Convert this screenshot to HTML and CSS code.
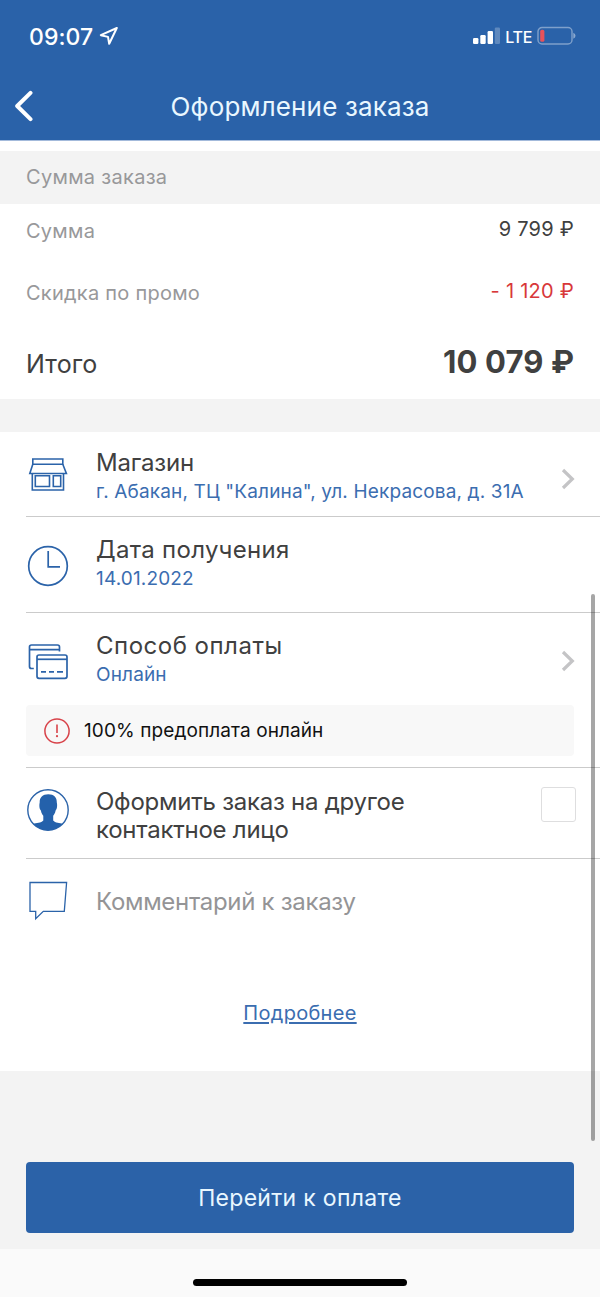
FILE: index.html
```html
<!DOCTYPE html>
<html lang="ru">
<head>
    <meta charset="UTF-8">
    <meta name="viewport" content="width=device-width, initial-scale=1.0">
    <title>Оформление заказа</title>
    <link rel="stylesheet" href="styles.css">
</head>
<body>
    <header class="header">
        <div class="status-bar">
            <div class="status-left">
                <span class="time">09:07</span>
                <svg class="location" width="20" height="20" viewBox="0 0 20 20">
                    <path d="M17.8 2 L1.8 9.2 L9 10.9 L10.2 17.8 Z" fill="none" stroke="#fff" stroke-width="2" stroke-linejoin="round"/>
                </svg>
            </div>
            <div class="status-right">
                <svg width="28" height="18" viewBox="0 0 28 18">
                    <g fill="#fff">
                        <rect x="0" y="11" width="5.4" height="6" rx="1.2"/>
                        <rect x="7.3" y="8" width="5.4" height="9" rx="1.2"/>
                        <rect x="14.6" y="4" width="5.4" height="13" rx="1.2"/>
                        <rect x="21.8" y="0.5" width="5.2" height="16.5" rx="1.2" opacity="0.25"/>
                    </g>
                </svg>
                <span class="network">LTE</span>
                <svg width="40" height="20" viewBox="0 0 40 20">
                    <rect x="2" y="1.5" width="34" height="16.5" rx="4" fill="none" stroke="#fff" stroke-opacity="0.4" stroke-width="1.4"/>
                    <rect x="4.2" y="3.8" width="4.2" height="12" rx="1.6" fill="#e8525a"/>
                    <path d="M37.3 6.8 Q39.5 7.6 39.5 9.8 Q39.5 12 37.3 12.8 Z" fill="#fff" opacity="0.45"/>
                </svg>
            </div>
        </div>
        <div class="nav-bar">
            <svg class="back" width="20" height="32" viewBox="0 0 20 32">
                <path d="M16.5 2.8 L3.2 16 L16.5 29.2" fill="none" stroke="#fff" stroke-width="4" stroke-linecap="round" stroke-linejoin="round"/>
            </svg>
            <h1>Оформление заказа</h1>
        </div>
    </header>

    <main class="content">
        <h2 class="section-title">Сумма заказа</h2>

        <section class="summary">
            <div class="summary-row">
                <span class="label">Сумма</span>
                <span class="value">9 799 ₽</span>
            </div>
            <div class="summary-row">
                <span class="label">Скидка по промо</span>
                <span class="value discount">- 1 120 ₽</span>
            </div>
            <div class="summary-row total">
                <span class="label">Итого</span>
                <span class="value">10 079 ₽</span>
            </div>
        </section>

        <section class="details">
            <div class="row shop">
                <svg class="icon" width="44" height="44" viewBox="0 0 44 44">
                    <g fill="none" stroke="#2b63a9" stroke-width="1.6">
                        <path d="M6.8 6 H36.8 V11.2 H6.8 Z"/>
                        <path d="M6.8 11.2 L3.8 20.5 H40.4 L36.8 11.2"/>
                        <path d="M6.3 21 V37 H37.5 V21"/>
                        <path d="M9.3 22.8 H23.5 V33.5 H9.3 Z"/>
                        <path d="M27.3 22.8 H34.7 V33.5 H27.3 Z"/>
                    </g>
                </svg>
                <div class="info">
                    <div class="name">Магазин</div>
                    <div class="sub address">г. Абакан, ТЦ "Калина", ул. Некрасова, д. 31А</div>
                </div>
                <svg class="chevron" width="16" height="22" viewBox="0 0 16 22">
                    <path d="M3 2 L12.3 11 L3 20" fill="none" stroke="#c4c4c6" stroke-width="3.2"/>
                </svg>
            </div>

            <div class="row date">
                <svg class="icon" width="44" height="44" viewBox="0 0 44 44">
                    <g fill="none" stroke="#2b63a9" stroke-width="1.7">
                        <circle cx="22" cy="22" r="19.3"/>
                        <path d="M22.2 7 V22.8 H34"/>
                    </g>
                </svg>
                <div class="info">
                    <div class="name">Дата получения</div>
                    <div class="sub">14.01.2022</div>
                </div>
            </div>

            <div class="payment">
                <div class="row">
                    <svg class="icon" width="44" height="44" viewBox="0 0 44 44">
                        <g fill="none" stroke="#2b63a9" stroke-width="1.7">
                            <path d="M7.8 27.5 H5.5 Q3.5 27.5 3.5 25.5 V6 Q3.5 4 5.5 4 H31.5 Q33.5 4 33.5 6 V10.6 M3.5 8.7 H33.5"/>
                            <rect x="11" y="14" width="30" height="23.3" rx="2"/>
                            <path d="M11 18.3 H41"/>
                            <path d="M15 30.8 H20 M23 30.8 H28 M31 30.8 H37"/>
                        </g>
                    </svg>
                    <div class="info">
                        <div class="name">Способ оплаты</div>
                        <div class="sub">Онлайн</div>
                    </div>
                    <svg class="chevron" width="16" height="22" viewBox="0 0 16 22">
                        <path d="M3 2 L12.3 11 L3 20" fill="none" stroke="#c4c4c6" stroke-width="3.2"/>
                    </svg>
                </div>
                <div class="notice">
                    <svg width="28" height="28" viewBox="0 0 28 28">
                        <circle cx="14" cy="14" r="12.1" fill="none" stroke="#d8434a" stroke-width="1.5"/>
                        <path d="M14 7.5 V16" stroke="#d8434a" stroke-width="1.6"/>
                        <circle cx="14" cy="19.2" r="1.1" fill="#d8434a"/>
                    </svg>
                    <span>100% предоплата онлайн</span>
                </div>
            </div>

            <label class="row contact">
                <svg class="icon" width="44" height="44" viewBox="0 0 44 44">
                    <circle cx="22" cy="22" r="20.2" fill="none" stroke="#2b63a9" stroke-width="1.4"/>
                    <path d="M22.3 6.3 C28 6.3 31 9.5 30.8 14.5 C31.6 18 30.9 21.5 29.6 22.5 C29.2 25 28.2 26.5 27.2 27.8 V32.5 C29 35 34 34.8 36.8 35.8 C33 40 28 42.2 22 42.2 C16 42.2 11 40 7.2 35.8 C10 34.8 15.4 35 17.3 32.5 V27.8 C16.2 26.5 15.3 25 14.9 22.5 C13.6 21.5 12.9 18 13.7 14.5 C13.5 9.5 16.6 6.3 22.3 6.3 Z" fill="#2461ab"/>
                </svg>
                <span class="name">Оформить заказ на другое контактное лицо</span>
                <input type="checkbox" class="checkbox">
            </label>

            <div class="row comment">
                <svg class="icon" width="44" height="44" viewBox="0 0 44 44">
                    <path d="M4 4.5 H40.6 L38.3 33.4 H17.3 L9.7 40.8 V33.4 H4 Z" fill="none" stroke="#2b63a9" stroke-width="1.3"/>
                </svg>
                <span class="placeholder">Комментарий к заказу</span>
            </div>

            <a class="more" href="#">Подробнее</a>
        </section>
    </main>

    <div class="actions">
        <button class="pay">Перейти к оплате</button>
    </div>

    <footer class="home-bar">
        <div class="home-indicator"></div>
    </footer>

    <div class="scrollbar"></div>
</body>
</html>
```
FILE: styles.css
```css
* {
    margin: 0;
    padding: 0;
    box-sizing: border-box;
    font-family: Inter, 'Liberation Sans', sans-serif;
}

body {
    position: relative;
    width: 600px;
    height: 1297px;
    background: #f3f3f3;
    color: #404040;
    overflow: hidden;
}

svg {
    display: block;
    flex-shrink: 0;
}

.header {
    height: 140px;
    background: #2a62a9;
    color: #fff;
}

.status-bar {
    display: flex;
    justify-content: space-between;
    align-items: center;
    height: 72px;
    padding: 0 24px 0 29px;
}

.status-left,
.status-right {
    display: flex;
    align-items: center;
}

.status-left {
    gap: 6px;
}

.status-right {
    gap: 4px;
}

.time {
    font-size: 23px;
    font-weight: 500;
    line-height: 30px;
    letter-spacing: 0.1px;
    padding-top: 1px;
}

.network {
    font-size: 16px;
    font-weight: 500;
    line-height: 20px;
    letter-spacing: -0.3px;
    padding-top: 1px;
}

.nav-bar {
    display: flex;
    align-items: center;
    height: 68px;
    padding: 0 14px;
    color: #e9f7ff;
}

h1 {
    flex: 1;
    margin-right: 20px;
    text-align: center;
    font-size: 26px;
    font-weight: 400;
    letter-spacing: 0.15px;
}

.content {
    padding-top: 10px;
    background: #fff;
    border-top: 1px solid #a3badb;
}

.section-title {
    height: 53px;
    padding-left: 26px;
    background: #f3f3f3;
    color: #98989a;
    font-size: 20px;
    font-weight: 400;
    line-height: 53px;
    letter-spacing: 0.3px;
}

.summary {
    height: 228px;
    padding: 0 26px;
    border-bottom: 33px solid #f3f3f3;
}

.summary-row {
    display: flex;
    justify-content: space-between;
    height: 62px;
    font-size: 20px;
    line-height: 54px;
    letter-spacing: 0.25px;
}

.summary-row .label {
    color: #98989a;
}

.summary-row .value {
    line-height: 51px;
}

.summary-row .discount {
    color: #d8383a;
}

.summary-row.total {
    font-size: 25px;
    line-height: 73px;
    letter-spacing: 0.1px;
}

.summary-row.total .label {
    color: #404040;
}

.summary-row.total .value {
    font-size: 31px;
    font-weight: 700;
    line-height: 67px;
}

.details {
    height: 639px;
}

.row {
    display: flex;
    align-items: flex-start;
    margin-left: 26px;
    padding-right: 24px;
}

.shop,
.date,
.contact {
    border-bottom: 1px solid #cbcbcb;
}

.info {
    flex: 1;
    white-space: nowrap;
}

.icon {
    margin-right: 26px;
}

.name {
    font-size: 24px;
    line-height: 30px;
}

.sub {
    color: #3b6db0;
    font-size: 19px;
    line-height: 27px;
    letter-spacing: 0.15px;
}

.shop {
    height: 85px;
    padding-top: 16px;
}

.shop .name {
    letter-spacing: -0.2px;
}

.shop .icon {
    margin-top: 5px;
}

.shop .chevron {
    margin-top: 20px;
}

.date {
    height: 96px;
    padding-top: 18px;
}

.date .name {
    letter-spacing: 0.3px;
}

.date .icon {
    margin-top: 9px;
}

.payment {
    height: 155px;
    padding-top: 18px;
    border-bottom: 1px solid transparent;
}

.payment .name {
    letter-spacing: 0.5px;
}

.payment .icon {
    margin-top: 10px;
}

.payment .chevron {
    margin-top: 19px;
}

.notice {
    display: flex;
    align-items: center;
    gap: 13px;
    height: 51px;
    margin: 17px 26px 0;
    padding-left: 17px;
    border-radius: 4px;
    background: #f8f8f8;
    color: #111;
    font-size: 19px;
    letter-spacing: 0.1px;
}

.contact {
    height: 92px;
    margin-top: -1px;
    padding-top: 20px;
    border-top: 1px solid #cbcbcb;
}

.contact .name {
    width: 340px;
    line-height: 28px;
    letter-spacing: -0.25px;
}

.checkbox {
    appearance: none;
    width: 35px;
    height: 35px;
    margin-top: -1px;
    margin-left: auto;
    border: 1.5px solid #dededf;
    border-radius: 3px;
    background: #fff;
}

.comment {
    padding-top: 19px;
}

.placeholder {
    color: #949496;
    font-size: 24px;
    line-height: 48px;
    letter-spacing: -0.3px;
}

.more {
    display: block;
    margin-top: 75px;
    color: #3b6db0;
    font-size: 20px;
    line-height: 24px;
    letter-spacing: 0.3px;
    text-align: center;
    text-underline-offset: 2px;
}

.actions {
    height: 178px;
    padding: 91px 26px 0;
    background: #f3f3f3;
}

.pay {
    width: 100%;
    height: 71px;
    border: none;
    border-radius: 4px;
    background: #2b62a8;
    color: #e9f7ff;
    font-size: 23px;
    letter-spacing: 0.3px;
}

.home-bar {
    display: flex;
    justify-content: center;
    height: 48px;
    padding-top: 30px;
    background: #fafafa;
}

.home-indicator {
    width: 214px;
    height: 7px;
    border-radius: 4px;
    background: #000;
}

/* overlay scrollbar thumb */
.scrollbar {
    position: absolute;
    top: 594px;
    right: 5px;
    width: 4px;
    height: 547px;
    border-radius: 2px;
    background: rgba(0, 0, 0, 0.35);
}
```
